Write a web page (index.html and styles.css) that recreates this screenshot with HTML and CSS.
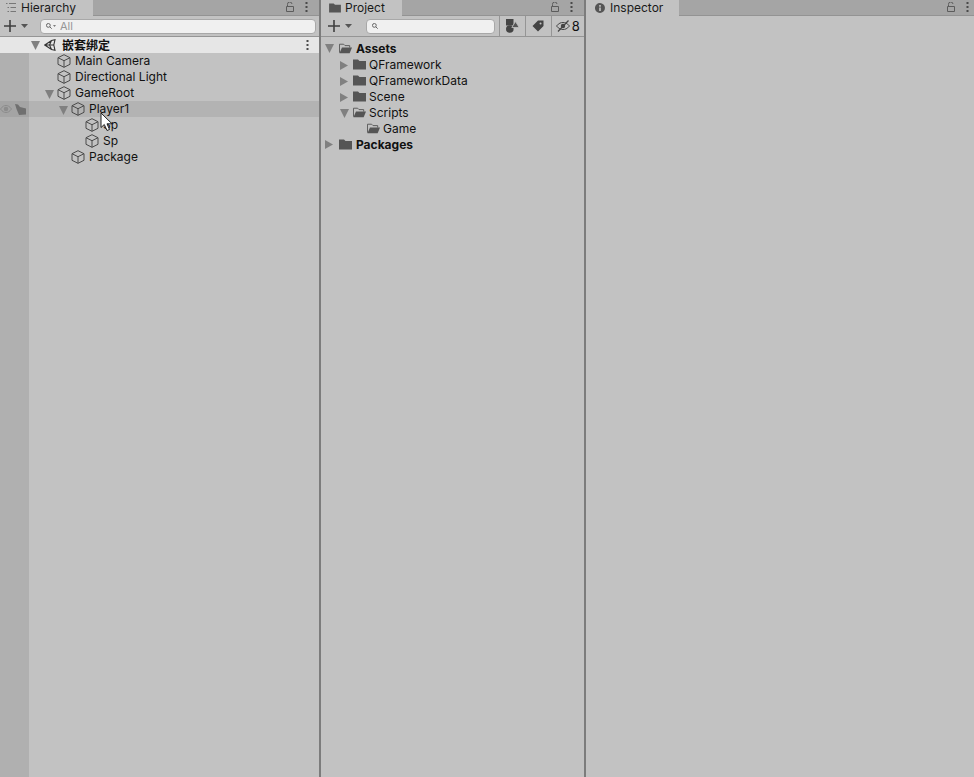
FILE: index.html
```html
<!DOCTYPE html>
<html lang="en">
<head>
    <meta charset="UTF-8">
    <meta name="viewport" content="width=device-width, initial-scale=1.0">
    <title>Unity Editor</title>
    <link rel="stylesheet" href="styles.css">
</head>
<body>
    <svg class="defs" width="0" height="0">
        <symbol id="cube" viewBox="0 0 14 14">
            <path d="M7 .7 13 3.700V10.300L7 13.300 1 10.300V3.700ZM1 3.700 7 6.700 13 3.700M7 6.700V13.300" fill="none" stroke="#4a4a4a" stroke-width="1"/>
        </symbol>
        <symbol id="folder" viewBox="0 0 13 11">
            <path d="M0 .5H5L6.500 2H13V10.500H0Z" fill="#555"/>
        </symbol>
        <symbol id="folder-open" viewBox="0 0 14 11">
            <path d="M.5 10V.9H5L6.500 2.400H11.500V4.500" fill="none" stroke="#555" stroke-width="1"/>
            <path d="M.5 10.500 3.200 4.500H14L11.500 10.500Z" fill="#555"/>
        </symbol>
        <symbol id="lock" viewBox="0 0 8 10">
            <path d="M.5 4.500H7.500V9.500H.5ZM1.500 4.500V2.500A2.200 2.200 0 0 1 6 2" fill="none" stroke="#5c5c5c" stroke-width="1"/>
        </symbol>
        <symbol id="kebab" viewBox="0 0 3 10">
            <path d="M.5 0H2.500V2H.5ZM.5 4H2.500V6H.5ZM.5 8H2.500V10H.5Z" fill="#4a4a4a"/>
        </symbol>
        <symbol id="plus" viewBox="0 0 12 12">
            <path d="M5.200 0H6.800V5.200H12V6.800H6.800V12H5.200V6.800H0V5.200H5.200Z" fill="#3f3f3f"/>
        </symbol>
        <symbol id="down" viewBox="0 0 7 4">
            <path d="M0 0H7L3.500 4Z" fill="#555"/>
        </symbol>
        <symbol id="right" viewBox="0 0 9 9">
            <path d="M0 0 8 4.500 0 9Z" fill="#808080"/>
        </symbol>
        <symbol id="open" viewBox="0 0 9 9">
            <path d="M0 0H9L4.500 9Z" fill="#808080"/>
        </symbol>
        <symbol id="glass" viewBox="0 0 6 6">
            <path d="M2.400.5A1.900 1.900 0 1 1 2.300 4.300 1.900 1.900 0 0 1 2.400.5ZM3.800 3.800 5.700 5.700" fill="none" stroke="#666" stroke-width="1"/>
        </symbol>
    </svg>

    <div class="editor">
        <section class="panel hierarchy">
            <div class="tabbar">
                <div class="tab">
                    <svg class="tab-icon" width="10" height="9" viewBox="0 0 10 9"><path d="M0 .5H1.500M3 .5H10M1.500 4.500H3M4.500 4.500H10M1.500 8.500H3M4.500 8.500H10" fill="none" stroke="#777" stroke-width="1"/></svg>
                    Hierarchy
                </div>
                <div class="tab-tools">
                    <svg class="lock"><use href="#lock"/></svg>
                    <svg class="kebab"><use href="#kebab"/></svg>
                </div>
            </div>
            <div class="toolbar">
                <div class="add">
                    <svg class="plus"><use href="#plus"/></svg>
                    <svg class="down"><use href="#down"/></svg>
                </div>
                <div class="search">
                    <svg class="glass"><use href="#glass"/></svg>
                    <svg class="glass-arrow"><use href="#down"/></svg>
                    <span class="placeholder">All</span>
                </div>
            </div>
            <div class="scene-row">
                <svg class="fold"><use href="#open"/></svg>
                <svg class="unity-icon" width="12" height="12" viewBox="0 0 12 12"><path d="M.8 6 7.500 1.500 11 .8 9.800 6 11 11.200 7.500 10.500ZM.8 6H9.800M7.500 1.500 5.500 6 7.500 10.500" fill="none" stroke="#333" stroke-width="1.100"/></svg>
                <span class="scene-name">嵌套绑定</span>
                <svg class="kebab scene-kebab"><use href="#kebab"/></svg>
            </div>
            <div class="tree">
                <div class="row depth-1"><svg class="cube"><use href="#cube"/></svg>Main Camera</div>
                <div class="row depth-1"><svg class="cube"><use href="#cube"/></svg>Directional Light</div>
                <div class="row depth-1"><svg class="fold"><use href="#open"/></svg><svg class="cube"><use href="#cube"/></svg>GameRoot</div>
                <div class="row depth-2 hover">
                    <div class="vis-tools">
                        <svg width="12" height="8" viewBox="0 0 12 8"><path d="M.5 4C2.500 1.200 4.300.5 6 .5S9.500 1.200 11.500 4C9.500 6.800 7.700 7.500 6 7.500S2.500 6.800.5 4Z" fill="none" stroke="#8c8c8c"/><circle cx="6" cy="4" r="2.300" fill="#8c8c8c"/></svg>
                        <svg width="11" height="11" viewBox="0 0 11 11"><path d="M0 0 3 .5 5 3 11 4.500V10.500L4 11 1.500 5Z" fill="#707070"/></svg>
                    </div>
                    <svg class="fold"><use href="#open"/></svg><svg class="cube"><use href="#cube"/></svg>Player1
                </div>
                <div class="row depth-3"><svg class="cube"><use href="#cube"/></svg>Sp</div>
                <div class="row depth-3"><svg class="cube"><use href="#cube"/></svg>Sp</div>
                <div class="row depth-2"><svg class="cube"><use href="#cube"/></svg>Package</div>
            </div>
            <svg class="cursor" width="13" height="20" viewBox="0 0 13 20"><path d="M1 1V15.500L4.300 12.500 7 18.500 9.500 17.500 7 11.800H12Z" fill="#fff" stroke="#222" stroke-width="1"/></svg>
        </section>

        <section class="panel project">
            <div class="tabbar">
                <div class="tab">
                    <svg class="tab-icon folder"><use href="#folder"/></svg>
                    Project
                </div>
                <div class="tab-tools">
                    <svg class="lock"><use href="#lock"/></svg>
                    <svg class="kebab"><use href="#kebab"/></svg>
                </div>
            </div>
            <div class="toolbar">
                <div class="add">
                    <svg class="plus"><use href="#plus"/></svg>
                    <svg class="down"><use href="#down"/></svg>
                </div>
                <div class="search short">
                    <svg class="glass"><use href="#glass"/></svg>
                </div>
                <div class="tool-btn">
                    <svg width="13" height="14" viewBox="0 0 13 14"><path d="M0 0H7.500V6.500H0Z" fill="#444"/><circle cx="3.800" cy="10" r="3.800" fill="#444"/><path d="M9.500 2.500 13.200 8.500H5.800Z" fill="#555" stroke="#c2c2c2" stroke-width=".8"/></svg>
                </div>
                <div class="tool-btn">
                    <svg width="12" height="12" viewBox="0 0 12 12"><path d="M6 .5H11.500V6L6 11.500.5 6ZM8.500 2.500A1 1 0 1 0 8.600 4.500 1 1 0 0 0 8.500 2.500Z" fill="#444" fill-rule="evenodd"/></svg>
                </div>
                <div class="tool-btn count">
                    <svg width="14" height="12" viewBox="0 0 14 12"><path d="M.5 6C3 3 5 2.500 7 2.500S11 3 13.500 6C11 9 9 9.500 7 9.500S3 9 .5 6Z" fill="none" stroke="#444"/><circle cx="7" cy="6" r="2.200" fill="#444"/><path d="M2 11.500 12.500 .5" stroke="#444" stroke-width="1.200"/></svg>
                    <span class="count-num">8</span>
                </div>
            </div>
            <div class="files">
                <div class="row bold file-0"><svg class="fold"><use href="#open"/></svg><svg class="dir"><use href="#folder-open"/></svg>Assets</div>
                <div class="row file-1"><svg class="fold"><use href="#right"/></svg><svg class="dir"><use href="#folder"/></svg>QFramework</div>
                <div class="row file-1"><svg class="fold"><use href="#right"/></svg><svg class="dir"><use href="#folder"/></svg>QFrameworkData</div>
                <div class="row file-1"><svg class="fold"><use href="#right"/></svg><svg class="dir"><use href="#folder"/></svg>Scene</div>
                <div class="row file-1"><svg class="fold"><use href="#open"/></svg><svg class="dir"><use href="#folder-open"/></svg>Scripts</div>
                <div class="row file-2"><svg class="dir"><use href="#folder-open"/></svg>Game</div>
                <div class="row bold file-0"><svg class="fold"><use href="#right"/></svg><svg class="dir"><use href="#folder"/></svg>Packages</div>
            </div>
        </section>

        <section class="panel inspector">
            <div class="tabbar">
                <div class="tab">
                    <svg class="tab-icon" width="10" height="10" viewBox="0 0 12 12"><path d="M6 0A6 6 0 1 1 5.900 12 6 6 0 0 1 6 0ZM5 2.500V4.500H7V2.500ZM5 5.500V9.500H7V5.500Z" fill="#555" fill-rule="evenodd"/></svg>
                    Inspector
                </div>
                <div class="tab-tools">
                    <svg class="lock"><use href="#lock"/></svg>
                    <svg class="kebab"><use href="#kebab"/></svg>
                </div>
            </div>
        </section>
    </div>
</body>
</html>
```

FILE: styles.css
```css
* {
    box-sizing: border-box;
}
html, body {
    margin: 0;
    height: 100%;
}
body {
    font-family: Inter, "Noto Sans CJK SC", sans-serif;
    font-size: 12px;
    color: #111;
    background: #c2c2c2;
    overflow: hidden;
}
.defs {
    position: absolute;
}
svg {
    display: block;
    flex: none;
}
.editor {
    display: flex;
    height: 777px;
    background: #7c7c7c;
    gap: 2px;
}
.panel {
    position: relative;
    display: flex;
    flex-direction: column;
    background: #c2c2c2;
}
.hierarchy {
    width: 319px;
}
.project {
    width: 263px;
}
.inspector {
    flex: 1;
}

.tabbar {
    display: flex;
    justify-content: space-between;
    height: 16px;
    background: #a5a5a5;
    border-bottom: 1px solid #939393;
}
.tab {
    display: flex;
    align-items: center;
    gap: 5px;
    height: 16px;
    padding: 0 17px 1px 6px;
    background: #c2c2c2;
    color: #1a1a1a;
}
.project .tab {
    gap: 4px;
    padding-left: 8px;
}
.inspector .tab {
    padding: 0 16px 1px 9px;
}
.tab-icon.folder {
    width: 12px;
    height: 10px;
}
.tab-tools {
    display: flex;
    align-items: flex-start;
    gap: 11px;
    padding: 2px 11px 0 0;
}
.inspector .tab-tools {
    padding-right: 5px;
}
.lock {
    width: 8px;
    height: 10px;
}
.kebab {
    width: 3px;
    height: 10px;
}

.toolbar {
    display: flex;
    align-items: center;
    height: 21px;
    border-bottom: 1px solid #959595;
}
.add {
    display: flex;
    align-items: center;
    gap: 5px;
    width: 40px;
    padding-left: 4px;
}
.project .add {
    padding-left: 7px;
    width: 46px;
}
.plus {
    width: 12px;
    height: 12px;
}
.down {
    width: 7px;
    height: 4px;
}
.search {
    display: flex;
    align-items: center;
    flex: 1;
    height: 15px;
    margin-right: 3px;
    padding-left: 5px;
    background: #f0f0f0;
    border: 1px solid #a8a8a8;
    border-radius: 4px;
}
.search.short {
    flex: none;
    width: 129px;
    margin: 0 4px 0 0;
}
.glass {
    width: 6px;
    height: 6px;
}
.glass-arrow {
    width: 3px;
    height: 2px;
    margin-left: 1px;
}
.placeholder {
    margin-left: 4px;
    color: #969696;
    font-size: 11px;
}
.tool-btn {
    display: flex;
    align-items: center;
    justify-content: center;
    width: 26px;
    height: 20px;
    border-left: 1px solid #959595;
}
.tool-btn.count {
    width: 34px;
    gap: 2px;
}
.count-num {
    font-size: 13px;
}

.row {
    position: relative;
    display: flex;
    align-items: center;
    height: 16px;
    white-space: nowrap;
}
.fold {
    width: 9px;
    height: 9px;
    margin-right: 4px;
}
.scene-row {
    display: flex;
    align-items: center;
    height: 16px;
    padding-left: 31px;
    background: #e6e6e6;
}
.unity-icon {
    margin-right: 6px;
}
.scene-name {
    flex: 1;
    margin-bottom: 2px;
    font-weight: 700;
}
.scene-kebab {
    margin-right: 10px;
}

.tree {
    flex: 1;
    background: linear-gradient(to right, #b0b0b0 29px, #c2c2c2 29px);
}
.tree .row {
    align-items: flex-start;
    line-height: 15px;
}
.tree .fold {
    margin-top: 5px;
}
.cube {
    width: 14px;
    height: 14px;
    margin-top: 1px;
    margin-right: 4px;
}
.depth-1 {
    padding-left: 57px;
}
.depth-2 {
    padding-left: 71px;
}
.depth-3 {
    padding-left: 85px;
}
.depth-1 .fold, .depth-2 .fold {
    margin-left: -12px;
    margin-right: 3px;
}
.hover {
    background: #b3b3b3;
}
.vis-tools {
    position: absolute;
    left: 0;
    top: 0;
    display: flex;
    align-items: center;
    gap: 3px;
    width: 29px;
    height: 16px;
    background: #a4a4a4;
}
.cursor {
    position: absolute;
    left: 100px;
    top: 112px;
}

.files {
    padding-top: 3px;
}
.dir {
    width: 13px;
    height: 11px;
    margin-right: 3px;
}
.bold {
    font-weight: 700;
}
.file-0 {
    padding-left: 4px;
}
.file-0 .fold {
    margin-top: 1px;
    margin-right: 5px;
}
.file-0 .dir {
    margin-right: 4px;
}
.file-1 {
    padding-left: 19px;
}
.file-1 .fold {
    margin-top: 3px;
}
.file-2 {
    padding-left: 46px;
}
```
